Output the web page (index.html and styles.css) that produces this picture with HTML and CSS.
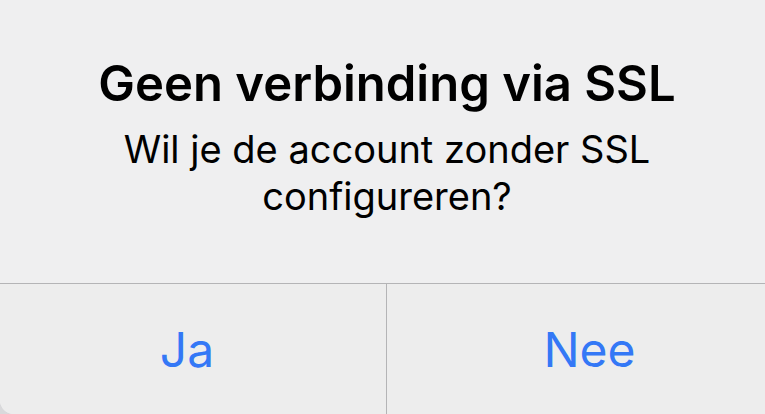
FILE: index.html
```html
<!DOCTYPE html>
<html lang="nl">
<head>
<meta charset="utf-8">
<title>Geen verbinding via SSL</title>
<link rel="stylesheet" href="styles.css">
</head>
<body>
<div class="alert">
  <div class="alert-body">
    <h1 class="alert-title">Geen verbinding via SSL</h1>
    <p class="alert-message">Wil je de account zonder SSL<br>configureren?</p>
  </div>
  <div class="alert-actions">
    <button class="alert-btn alert-btn-left">Ja</button>
    <button class="alert-btn alert-btn-right">Nee</button>
  </div>
</div>
</body>
</html>
```

FILE: styles.css
```css
html, body {
  margin: 0;
  padding: 0;
  overflow: hidden;
  background: #d9d9db;
}
body {
  width: 765px;
  height: 414px;
  font-family: Inter, "Noto Sans", sans-serif;
}
.alert {
  width: 774px;
  height: 414px;
  background: #efeff0;
  border-radius: 0 0 0 14px;
  overflow: hidden;
  display: flex;
  flex-direction: column;
}
.alert-body {
  padding: 56px 0 63px;
  text-align: center;
  border-bottom: 1px solid #b4b4b6;
}
.alert-title {
  margin: 0;
  font-size: 49px;
  line-height: 56px;
  font-weight: 600;
  color: #000;
}
.alert-message {
  margin: 14px 0 0;
  font-size: 38px;
  line-height: 47px;
  font-weight: 400;
  color: #000;
}
.alert-actions {
  flex: 1;
  display: flex;
  background: #ededed;
}
.alert-btn {
  border: 0;
  background: transparent;
  font-family: inherit;
  font-size: 48px;
  line-height: 58px;
  color: #3478f6;
  padding: 37px 0 0;
  margin: 0;
  display: flex;
  justify-content: center;
  align-items: flex-start;
}
.alert-btn-left {
  width: 387px;
  padding-right: 12px;
  box-sizing: border-box;
  border-right: 1px solid #b4b4b6;
}
.alert-btn-right {
  width: 387px;
  padding-left: 18px;
  box-sizing: border-box;
}
```
